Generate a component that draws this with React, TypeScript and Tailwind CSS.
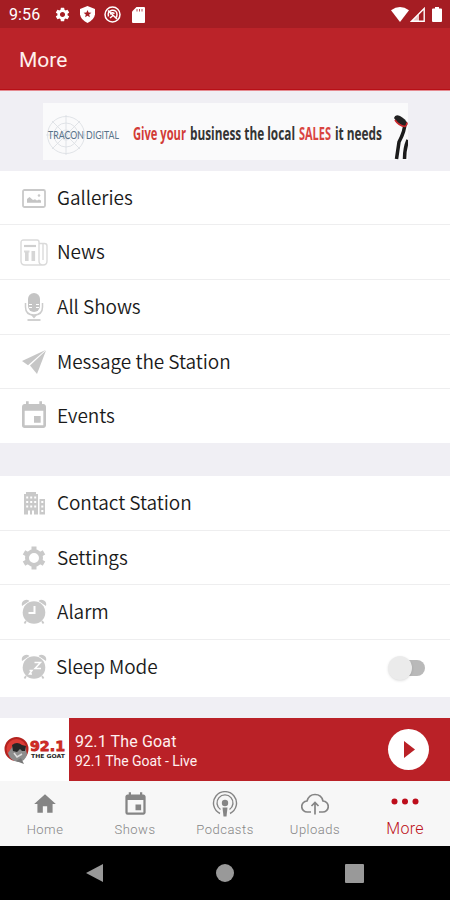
import type { ReactNode } from "react";
import { MdEvent, MdHome, MdSettings } from "react-icons/md";

const cjk = "font-['Noto_Sans_CJK_SC','Noto_Sans',sans-serif]";

function GalleryIcon() {
  return (
    <svg width="24" height="19" viewBox="0 0 24 19" fill="none">
      <rect x="1" y="1" width="22" height="17" rx="1.5" stroke="#c9c9c9" strokeWidth="1.8" />
      <path d="M5 13.800V10l2.500-2 3.500 3 2-.7 2 1.200 2-1 2 1v2.300z" fill="#c4c4c4" />
      <circle cx="17" cy="6.500" r="1.300" fill="#c9c9c9" />
    </svg>
  );
}

function NewsIcon() {
  return (
    <svg width="28" height="27" viewBox="0 0 28 27" fill="none" stroke="#dadada" strokeWidth="1.400">
      <path d="M1 3.500Q1 1 3.500 1H17q2 0 2 2v19q0 4 4 4H5q-4 0-4-4z" />
      <path d="M19 4.500h5.500q2.500 0 2.500 2.500v15q0 4-4 4M23 5v16" />
      <path d="M4 7h12" stroke="#cfcfcf" strokeWidth="2.200" />
      <path d="M4 12.500h5.500" strokeWidth="2" />
      <path d="M6.800 13v9M13.300 12v10" stroke="#d6d6d6" strokeWidth="3.600" />
    </svg>
  );
}

function MicIcon() {
  return (
    <svg width="20" height="30" viewBox="0 0 20 30" fill="none" stroke="#cccccc">
      <rect x="4" y="1" width="12" height="19" rx="6" fill="#c4c4c4" stroke="none" />
      <path d="M5 12.500h3M5 15.500h3M12 12.500h3M12 15.500h3" stroke="#fff" strokeWidth="1" />
      <path d="M1.500 11v4q0 8 8.500 8t8.500-8v-4" strokeWidth="1.500" />
      <path d="M7 23h6l-3 3.500z" fill="#cccccc" stroke="none" />
      <path d="M3.500 28h13" strokeWidth="1.800" />
    </svg>
  );
}

function PlaneIcon() {
  return (
    <svg width="24" height="24" viewBox="0 0 24 24" fill="#c6c6c6">
      <path d="M23.500 0 0 11l6 4.200z" />
      <path d="M24 .5 8 15.500l7 8.500z" />
    </svg>
  );
}

function BuildingIcon() {
  return (
    <svg width="23" height="23" viewBox="0 0 23 23" fill="#c9c9c9">
      <path d="M3 0h10v2h2v20.500h-4v-4H9v4H7v-4H5v4H1V2h2zM3.200 4.500v2h2v-2zm4 0v2h2v-2zm4 0v2h2v-2zM3.200 9v2h2V9zm4 0v2h2V9zm4 0v2h2V9zM3.200 13.500v2h2v-2zm4 0v2h2v-2zm4 0v2h2v-2z" fillRule="evenodd" />
      <path d="M16.500 7H22v15.500h-5.500zM18.300 9v2h2V9zm0 4.500v2h2v-2zm0 4.500v2h2v-2z" fillRule="evenodd" />
    </svg>
  );
}

function GearIcon() {
  return (
    <svg width="24" height="24" viewBox="0 0 24 24" fill="none" stroke="#c9c9c9">
      <circle cx="12" cy="12" r="7" strokeWidth="4" />
      <path d="M12 .5v4M12 19.500v4M2 6.300l3.500 2M18.500 15.700l3.500 2M2 17.700l3.500-2M18.500 8.300l3.500-2" strokeWidth="5" />
    </svg>
  );
}

function ClockIcon({ sleep = false }: { sleep?: boolean }) {
  return (
    <svg width="26" height="26" viewBox="0 0 26 26" fill="none">
      <path d="M1 7Q0 3 3 1.500T8.500 2zM25 7q1-4-2-5.500T17.500 2z" fill="#c9c9c9" />
      <circle cx="13" cy="13.500" r="11.300" fill="#c9c9c9" />
      <path d="m5 22-1.500 2.500M21 22l1.500 2.500" stroke="#c9c9c9" strokeWidth="1.800" />
      {sleep ? (
        <path d="M13.500 8.500h6l-5.500 6h6M8.500 16.500H11L8.500 20H11" stroke="#fff" strokeWidth="1.500" />
      ) : (
        <path d="M13.500 7v7H7.500" stroke="#fff" strokeWidth="2" />
      )}
    </svg>
  );
}

function Row({
  icon,
  label,
  height,
  text = "",
  children,
}: {
  icon: ReactNode;
  label: string;
  height: string;
  text?: string;
  children?: ReactNode;
}) {
  return (
    <div className={`flex shrink-0 items-start border-[#eeeeef] bg-white ${height}`}>
      <div className="flex h-[54px] w-[57px] shrink-0 items-center justify-center pl-[11px]">{icon}</div>
      <div className={`flex h-[53px] flex-1 items-center pb-[1px] text-[19px] font-[350] tracking-[-0.06px] whitespace-nowrap text-[#1a1a1a] ${cjk} ${text}`}>{label}</div>
      {children}
    </div>
  );
}

function StatusBar() {
  return (
    <div className="flex h-[28px] shrink-0 items-center bg-[#a51d23] pt-[1px] text-white">
      <span className="ml-[9px] w-[45px] font-[Roboto,sans-serif] text-[16px] tracking-[0.1px]">9:56</span>
      <MdSettings size={17} />
      <svg className="ml-[9px]" width="15" height="17" viewBox="0 0 15 17">
        <path d="M7.500 0 15 3v5.500Q14 14 7.500 17 1 14 0 8.500V3z" fill="#fff" />
        <path d="m7.500 4 1.100 2.500 2.800.2-2.200 1.800.7 2.700-2.400-1.400-2.400 1.400.7-2.700-2.200-1.800 2.800-.2z" fill="#a51d23" />
      </svg>
      <svg className="ml-[9px]" width="17" height="17" viewBox="0 0 17 17" fill="none" stroke="#fff">
        <circle cx="8.500" cy="8.500" r="7.500" strokeWidth="1.500" />
        <path d="m4 4.500 9 8.500M4.500 10.500q-1.500-5 3.500-6.200 5-.3 5 4.200 0 2-1 3M6.200 8.500q1.500-3 4.300-.8M6 12l3-2.500" strokeWidth="1.500" />
      </svg>
      <svg className="ml-[11px]" width="13" height="16" viewBox="0 0 13 16">
        <path d="M4.500 0H12q1 0 1 1v14q0 1-1 1H1q-1 0-1-1V4.500z" fill="#fff" />
        <path d="M5 2v2.500M7.500 2v2.500M10 2v2.500" stroke="#a51d23" strokeWidth=".8" />
      </svg>
      <svg className="ml-auto" width="18" height="15" viewBox="0 0 18 15" fill="#fff">
        <path d="M0 3.200Q9-3 18 3.200L9 15z" />
      </svg>
      <svg className="ml-[1px]" width="15" height="15" viewBox="0 0 15 15">
        <path d="M1.500 14.300 14.200 1.500v12.800z" fill="none" stroke="#fff" strokeWidth="1.400" />
        <path d="M9 7v7H2z" fill="#fff" opacity=".75" />
      </svg>
      <svg className="mr-[8px] ml-[7px]" width="10" height="15" viewBox="0 0 10 15" fill="#fff">
        <path d="M3 0h4v1.500h2q1 0 1 1V14q0 1-1 1H1q-1 0-1-1V2.500q0-1 1-1h2z" />
      </svg>
    </div>
  );
}

function Banner() {
  return (
    <div className="flex h-[81px] shrink-0 border-t border-[#e58a90] bg-[#f0eff4] pt-[12px] pl-[43px]">
      <svg width="365" height="57" viewBox="0 0 365 57">
        <rect width="365" height="57" fill="#fafafb" />
        <g fill="none" stroke="#dce0e4" strokeWidth=".9">
          <circle cx="23" cy="32" r="18.500" />
          <circle cx="23" cy="32" r="12" />
          <circle cx="23" cy="32" r="5" />
          <path d="M23 12v40M3 32h40M9 18l28 28M37 18 9 46" />
        </g>
        <text x="5" y="35.500" fontFamily="Lato, sans-serif" fontSize="10.500" fill="#587389" textLength="71" lengthAdjust="spacingAndGlyphs">TRACON DIGITAL</text>
        <g fontFamily="'Open Sans', sans-serif" fontWeight="700" fontSize="17">
          <text x="90" y="37" fill="#d23c37" textLength="53" lengthAdjust="spacingAndGlyphs">Give your</text>
          <text x="147" y="37" fill="#343434" textLength="105" lengthAdjust="spacingAndGlyphs">business the local</text>
          <text x="256" y="37" fill="#d94440" textLength="32" lengthAdjust="spacingAndGlyphs">SALES</text>
          <text x="292" y="37" fill="#343434" textLength="47" lengthAdjust="spacingAndGlyphs">it needs</text>
        </g>
        <path d="M362 19q0 9-6 20l-2.500 17M365 37q-3.500 8-3.500 19" fill="none" stroke="#1b1b1b" strokeWidth="3.500" />
        <path d="M351 15q1-4 6-2 6 3 7.500 8-1 3-4 2-6-2-9.500-8z" fill="#222" />
        <path d="M352 17q4 6 10 6.500 2-1 2-4" stroke="#c9272c" strokeWidth="1.700" fill="none" />
      </svg>
    </div>
  );
}

function Logo() {
  return (
    <svg width="69" height="62" viewBox="0 0 69 62">
      <rect width="69" height="62" fill="#fff" />
      <circle cx="16.500" cy="31" r="11" fill="#dc3c36" stroke="#b3231f" strokeWidth="2" />
      <path d="M8 35q2 8 10 9 8-1 9-8l-2-8H13z" fill="#8d8d8d" />
      <path d="M12 27q5-4 10 0l4 1-1 5h-3l-2-2-3 3-4-1z" fill="#272727" />
      <path d="m16 43 8 3-3-6z" fill="#777" />
      <path d="m14 35 3 4 5-3" stroke="#ddd" fill="none" strokeWidth="1.500" />
      <text x="30" y="32.500" fontFamily="'DejaVu Sans', sans-serif" fontWeight="700" fontSize="14" fill="#d52c27" stroke="#c2241f" strokeWidth=".8" textLength="35" lengthAdjust="spacingAndGlyphs">92.1</text>
      <text x="31" y="39.500" fontFamily="'DejaVu Sans', sans-serif" fontWeight="700" fontSize="5.500" fill="#252525" textLength="34" lengthAdjust="spacingAndGlyphs">THE GOAT</text>
    </svg>
  );
}

function Player() {
  return (
    <div className="flex h-[63px] shrink-0 items-start bg-[#ba2127]">
      <div className="h-[63px] w-[69px] bg-white"><Logo /></div>
      <div className="flex-1 pt-[13px] pl-[6px] font-[Roboto,sans-serif] text-[#fff0f0]">
        <div className="text-[16px] leading-[21px] tracking-[0.15px]">92.1 The Goat</div>
        <div className="text-[14px] leading-[18px] tracking-[-0.05px]">92.1 The Goat - Live</div>
      </div>
      <div className="mt-[11px] mr-[21px] flex h-[41px] w-[41px] items-center justify-center rounded-full bg-white">
        <svg width="12" height="17" viewBox="0 0 12 17"><path d="M1 0 12 8.500 1 17z" fill="#ba2127" /></svg>
      </div>
    </div>
  );
}

function Tab({ icon, label, text = "mt-[11px] text-[13px] tracking-[0.5px]" }: { icon: ReactNode; label: string; text?: string }) {
  return (
    <div className="flex w-[90px] flex-col items-center font-[Roboto,sans-serif]">
      <div className="flex h-[30px] w-full items-center justify-center pt-[16px]">{icon}</div>
      <div className={`leading-[16px] font-light ${text}`}>{label}</div>
    </div>
  );
}

function TabBar() {
  return (
    <div className="flex h-[65px] shrink-0 bg-[#f7f7f7] text-[#858585]">
      <Tab label="Home" icon={<MdHome size={26} />} />
      <Tab label="Shows" icon={<MdEvent size={27} />} />
      <Tab
        label="Podcasts"
        icon={
          <svg width="26" height="26" viewBox="0 0 26 26" fill="none" stroke="#858585">
            <path d="M8 22.500a11.500 11.500 0 1 1 10 0" strokeWidth="1.400" />
            <path d="M8.500 18.500a8 8 0 1 1 9 0" strokeWidth="1.400" />
            <circle cx="13" cy="12" r="3.200" fill="#858585" stroke="none" />
            <path d="M10.500 16.500h5l-1 9h-3z" fill="#858585" stroke="none" />
          </svg>
        }
      />
      <Tab
        label="Uploads"
        icon={
          <svg width="28" height="22" viewBox="0 0 28 22" fill="none" stroke="#858585" strokeWidth="1.700">
            <path d="M10 19H6.500a5.500 5.500 0 0 1-.5-11Q8 1.500 14 1.500q6.500 0 8 6.500a5.500 5.500 0 0 1-.5 11H18" />
            <path d="M14 21.500v-12M10.500 13 14 9.500l3.500 3.500" />
          </svg>
        }
      />
      <Tab
        label="More"
        text="mt-[10px] text-[16px] tracking-[0.3px] text-[#bd1220]"
        icon={
          <svg className="mb-[5px]" width="28" height="7" viewBox="0 0 28 7" fill="#bd0d1b">
            <circle cx="3.500" cy="3.500" r="3" /><circle cx="14" cy="3.500" r="3" /><circle cx="24.500" cy="3.500" r="3" />
          </svg>
        }
      />
    </div>
  );
}

export default function App() {
  return (
    <div className="flex h-[900px] w-[450px] flex-col overflow-hidden bg-[#f0eff4]">
      <StatusBar />
      <div className="flex h-[62px] shrink-0 items-center border-b border-[#b80f16] bg-[#bb2329] pt-[5px] pl-[19px] font-[Roboto,sans-serif] text-[21px] text-[#fff0ee]">More</div>
      <Banner />
      <Row height="h-[54px] border-b" label="Galleries" icon={<GalleryIcon />} />
      <Row height="h-[55px] border-b" label="News" icon={<NewsIcon />} />
      <Row height="h-[55px] border-b" label="All Shows" icon={<MicIcon />} />
      <Row height="h-[54px] border-b" label="Message the Station" icon={<PlaneIcon />} />
      <Row height="h-[54px]" label="Events" icon={<MdEvent size={32} color="#c4c4c4" />} />
      <div className="h-[33px] shrink-0" />
      <Row height="h-[55px] border-b" label="Contact Station" icon={<BuildingIcon />} />
      <Row height="h-[54px] border-b" label="Settings" icon={<GearIcon />} />
      <Row height="h-[55px] border-b" label="Alarm" icon={<ClockIcon />} />
      <Row height="h-[57px]" text="-ml-[1px]" label="Sleep Mode" icon={<ClockIcon sleep />}>
        <div className="mt-[20px] mr-[25px] flex h-[16px] w-[36px] items-center rounded-full bg-[#b9b9b9]">
          <div className="-ml-[1px] h-[24px] w-[24px] shrink-0 rounded-full bg-[#ebebeb] shadow-sm" />
        </div>
      </Row>
      <div className="h-[21px] shrink-0" />
      <Player />
      <TabBar />
      <div className="flex h-[54px] shrink-0 items-center bg-black pl-[86px] text-[#999999]">
        <svg width="17" height="20" viewBox="0 0 17 20" fill="currentColor"><path d="M17 1v18L0 10z" /></svg>
        <div className="ml-[113px] h-[18px] w-[18px] rounded-full bg-[#999999]" />
        <div className="ml-[111px] h-[19px] w-[19px] rounded-[1px] bg-[#999999]" />
      </div>
    </div>
  );
}
